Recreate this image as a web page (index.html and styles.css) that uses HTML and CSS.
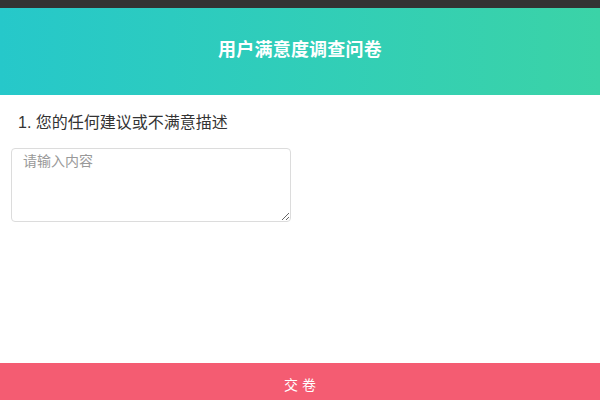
FILE: index.html
```html
<!DOCTYPE html>
<html lang="zh-CN">
<head>
<meta charset="utf-8">
<title>用户满意度调查问卷</title>
<link rel="stylesheet" href="styles.css">
</head>
<body>
<div class="page">
  <div class="topbar"></div>
  <header class="header">
    <h1 class="title">用户满意度调查问卷</h1>
  </header>
  <main class="content">
    <div class="question">1. 您的任何建议或不满意描述</div>
    <textarea class="answer" placeholder="请输入内容"></textarea>
  </main>
  <button class="submit">交 卷</button>
</div>
</body>
</html>
```
FILE: styles.css
```css
html, body {
  margin: 0;
  padding: 0;
  height: 100%;
}
body {
  font-family: "Liberation Sans", "Noto Sans CJK SC", sans-serif;
  color: #333;
  background: #fff;
}
.page {
  display: flex;
  flex-direction: column;
  height: 100vh;
}
.topbar {
  height: 8px;
  background: #333333;
  flex: none;
}
.header {
  flex: none;
  height: 87px;
  box-sizing: border-box;
  padding-bottom: 3px;
  display: flex;
  align-items: center;
  justify-content: center;
  background: linear-gradient(to right, #26c8ca, #3bd3a7);
}
.title {
  margin: 0;
  font-size: 18px;
  line-height: 24px;
  font-weight: bold;
  color: #fff;
  letter-spacing: 0.2px;
}
.content {
  flex: 1;
  padding: 17px 11px 0;
}
.question {
  font-size: 16px;
  line-height: 22px;
  padding-left: 7px;
  color: #333;
}
.answer {
  display: block;
  box-sizing: border-box;
  margin-top: 14px;
  width: 280px;
  height: 74px;
  border: 1px solid #dcdcdc;
  border-radius: 4px;
  padding: 2px 11px;
  font-family: "Liberation Sans", "Noto Sans CJK SC", sans-serif;
  font-size: 14px;
  line-height: 20px;
  color: #333;
  resize: vertical;
  outline: none;
}
.answer::placeholder {
  color: #999;
}
.submit {
  flex: none;
  height: 37px;
  border: none;
  margin: 0;
  background: #f45c72;
  color: #fff;
  font-family: "Liberation Sans", "Noto Sans CJK SC", sans-serif;
  font-size: 14px;
  padding: 4px 0 0;
  width: 100%;
}
```
